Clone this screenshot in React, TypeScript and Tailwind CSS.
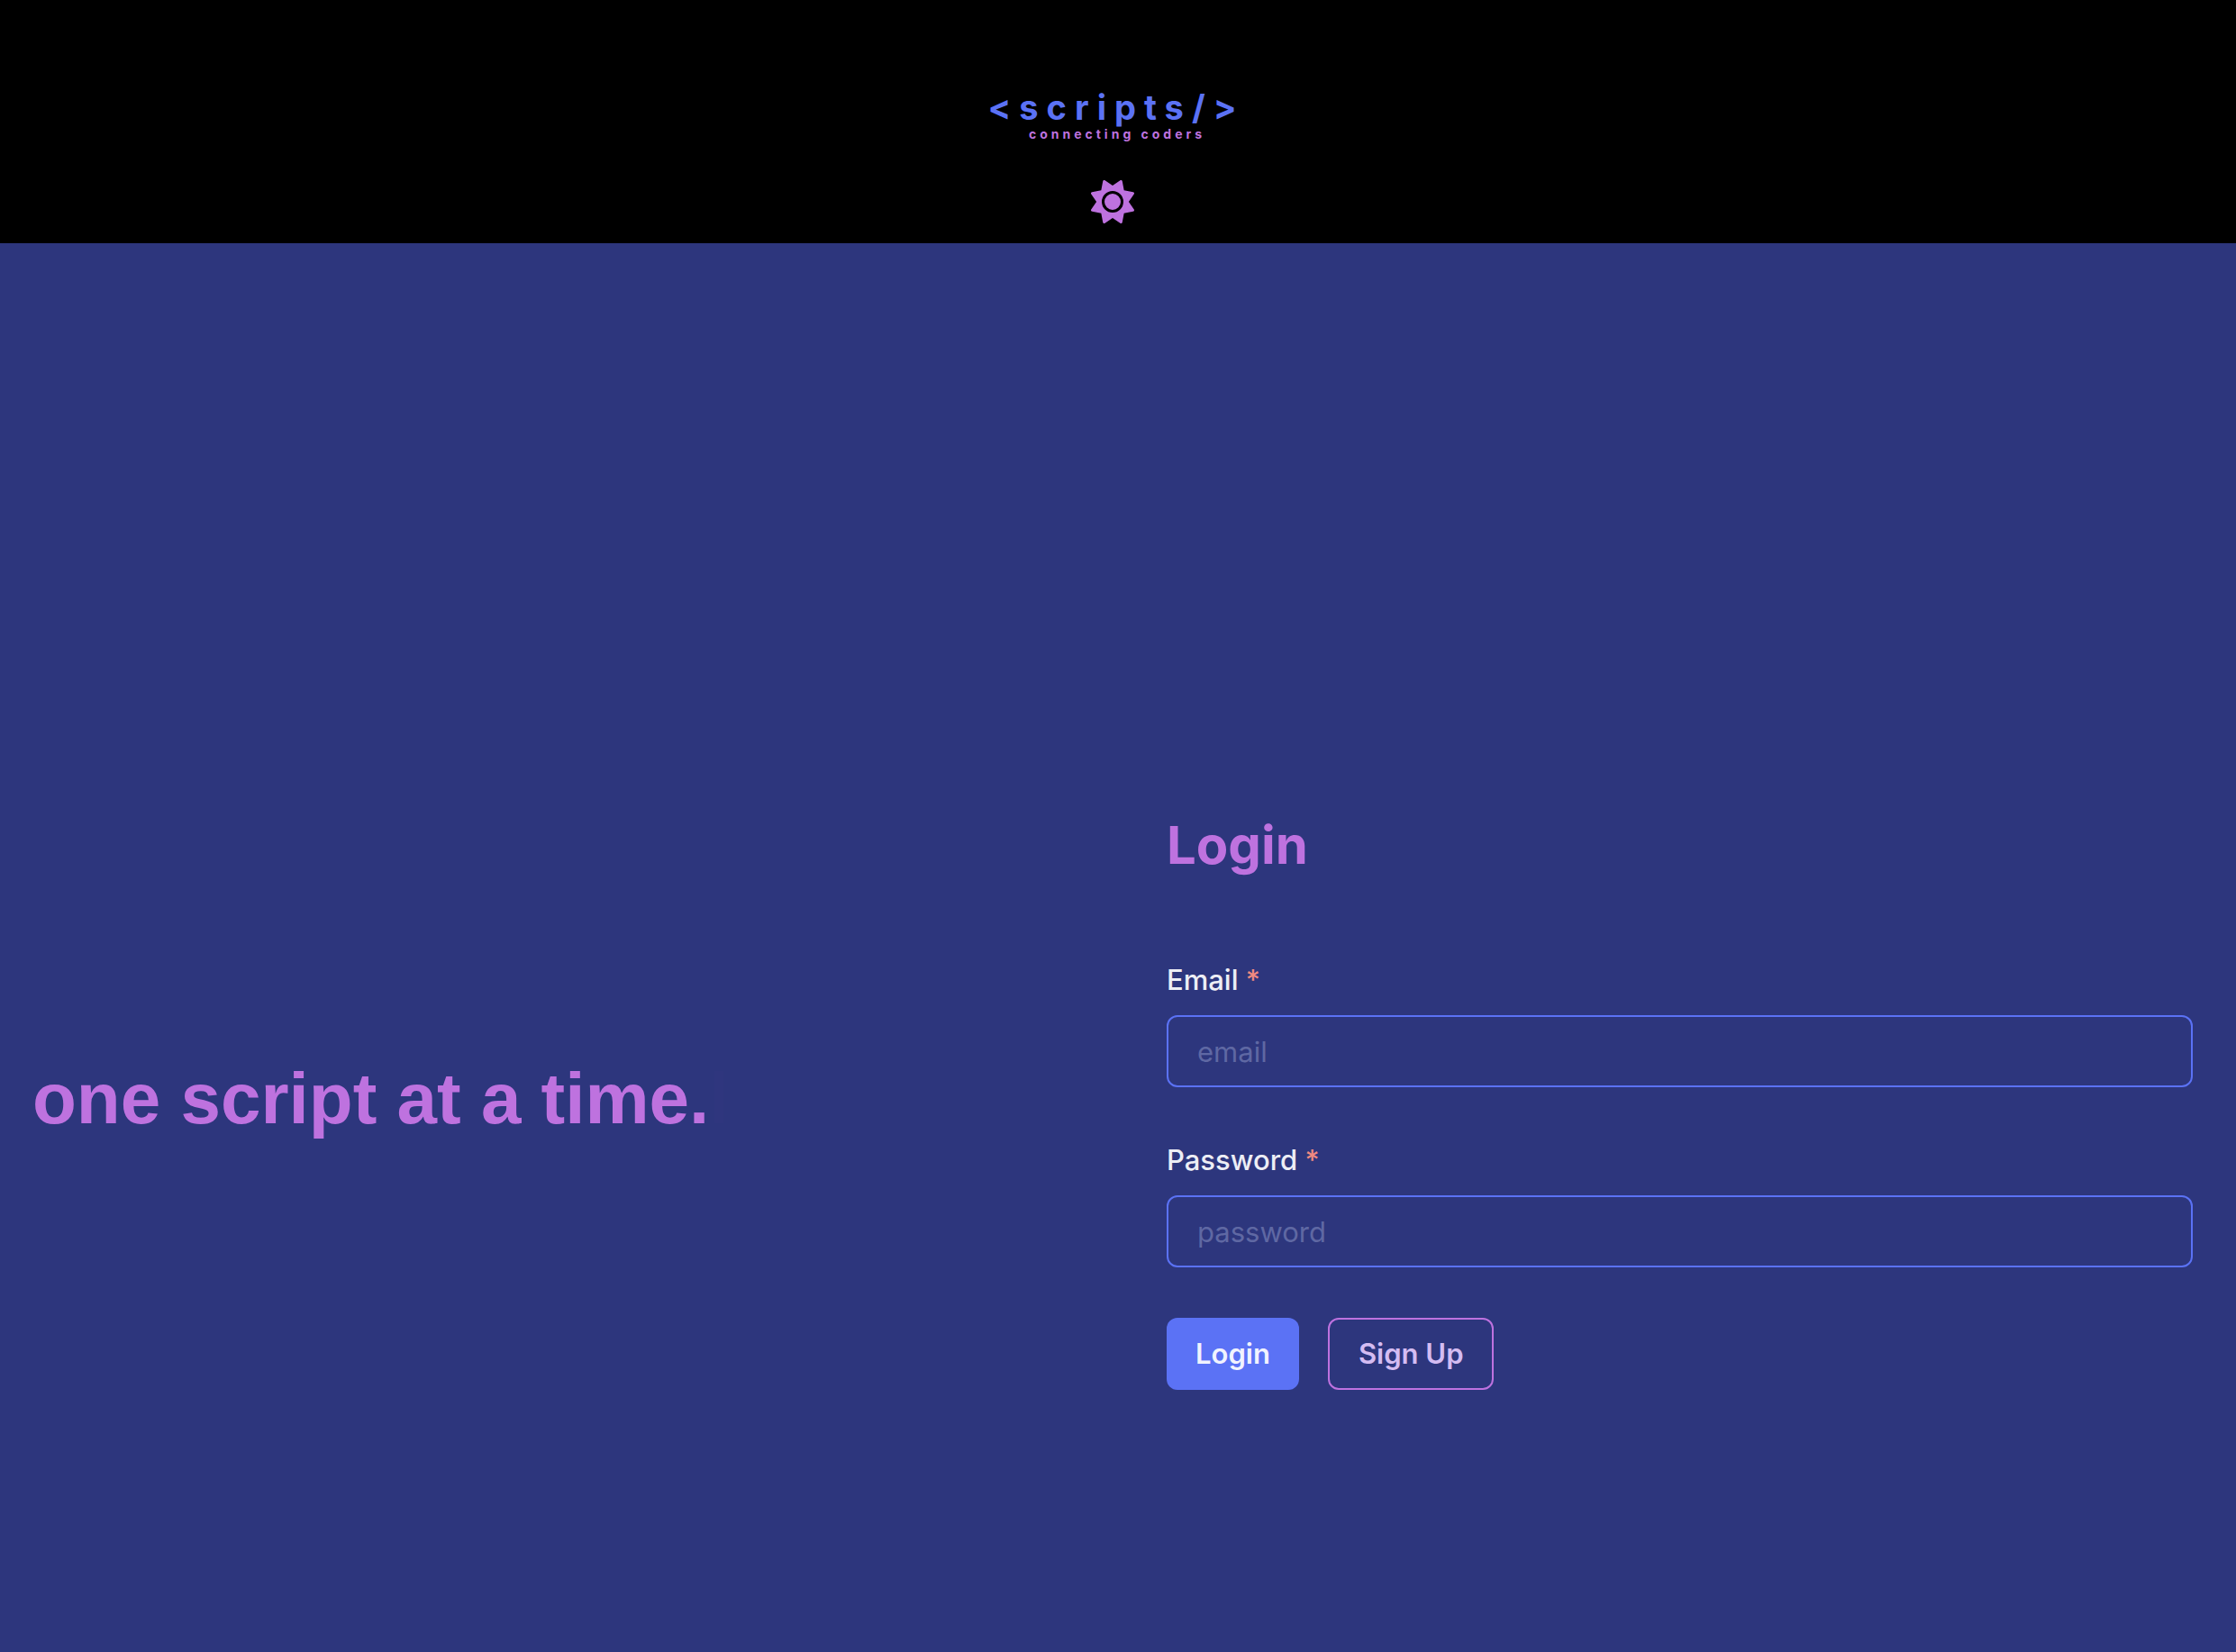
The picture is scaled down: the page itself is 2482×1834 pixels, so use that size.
import { useId } from "react";
import { FaSun } from "react-icons/fa6";

function Logo() {
  return (
    <a href="#" className="flex flex-col items-center font-bold leading-none">
      <span className="pl-2 text-[38px] leading-10 tracking-[9px] text-[#5b72f5]">{"<scripts/>"}</span>
      <span className="pl-2.5 text-sm leading-5 tracking-[4px] text-[#be72df]">connecting coders</span>
    </a>
  );
}

function Header() {
  return (
    <header className="flex flex-col items-center bg-black pt-[99px] pb-[22px] pr-3">
      <Logo />
      <button type="button" aria-label="Toggle colour mode" className="mt-[41px] text-5xl text-[#be72df]">
        <FaSun />
      </button>
    </header>
  );
}

function Field({ label, type, placeholder }: { label: string; type: string; placeholder: string }) {
  const id = useId();
  return (
    <div className="flex flex-col gap-[15px]">
      <label htmlFor={id} className="text-[31px] leading-12 font-medium text-[#edeef5]">
        {label} <span className="text-[#f08a80]">*</span>
      </label>
      <input
        id={id}
        type={type}
        placeholder={placeholder}
        className="h-20 w-full rounded-xl border-2 border-[#5b72f5] bg-transparent px-8 text-[31px] text-white outline-none placeholder:text-[#5f68a3]"
      />
    </div>
  );
}

function LoginForm() {
  return (
    <form className="flex flex-col">
      <h2 className="text-[58px] leading-[60px] font-bold text-[#be72df]">Login</h2>
      <div className="mt-24 flex flex-col gap-[57px]">
        <Field label="Email" type="email" placeholder="email" />
        <Field label="Password" type="password" placeholder="password" />
      </div>
      <div className="mt-14 flex gap-8">
        <button type="submit" className="h-20 rounded-xl bg-[#5b72f5] px-8 text-[31px] font-semibold text-[#f1f3fe]">
          Login
        </button>
        <button type="button" className="h-20 rounded-xl border-2 border-[#be72df] px-8 text-[31px] font-semibold text-[#d4bcf2]">
          Sign Up
        </button>
      </div>
    </form>
  );
}

export default function App() {
  return (
    <div className="flex min-h-screen flex-col bg-[#2d367d] font-['Inter',sans-serif]">
      <Header />
      <main className="grid flex-1 grid-cols-[1259fr_1139fr] items-center pt-[347px] pr-12 pl-9">
        <h1 className="pb-3 font-['Liberation_Sans',Arial,sans-serif] text-[80px] font-bold text-[#be72df]">
          one script at a time.
          <span aria-hidden="true" className="ml-1.5 inline-block h-[58px] w-2.5 bg-[#2f367e]" />
        </h1>
        <LoginForm />
      </main>
    </div>
  );
}
